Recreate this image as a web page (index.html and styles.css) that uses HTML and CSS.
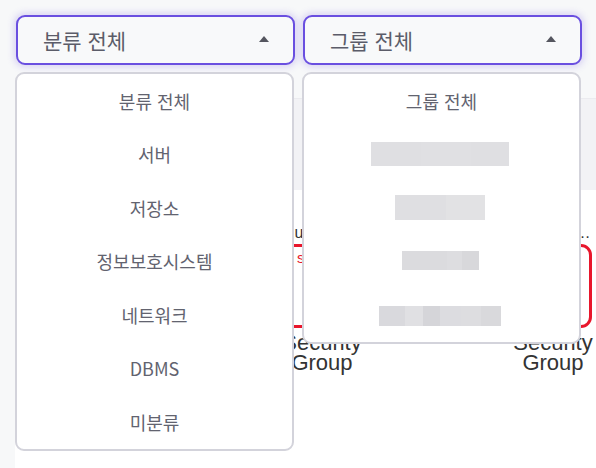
FILE: index.html
```html
<!DOCTYPE html>
<html lang="ko">
<head>
<meta charset="utf-8">
<link rel="stylesheet" href="styles.css">
</head>
<body>
<div class="toolbar">
  <div class="select-wrap">
    <div class="select"><span>분류 전체</span><span class="caret"></span></div>
    <ul class="menu">
      <li>분류 전체</li>
      <li>서버</li>
      <li>저장소</li>
      <li>정보보호시스템</li>
      <li>네트워크</li>
      <li>DBMS</li>
      <li>미분류</li>
    </ul>
  </div>
  <div class="select-wrap">
    <div class="select"><span>그룹 전체</span><span class="caret"></span></div>
    <ul class="menu">
      <li>그룹 전체</li>
      <li><span class="blur b1"></span></li>
      <li><span class="blur b2"></span></li>
      <li><span class="blur b3"></span></li>
      <li><span class="blur b4"></span></li>
    </ul>
  </div>
</div>
<div class="panel">
  <div class="band"></div>
  <div class="canvas">
    <div class="node n1">
      <div class="node-title">Rule-sg-web-prod</div>
      <div class="node-box"><span class="node-tag">sg</span></div>
      <div class="node-label"><div>Security</div><div>Group</div></div>
    </div>
    <div class="node n2">
      <div class="node-title">Rule-sg-db-prod01</div>
      <div class="node-box"><span class="node-tag">sg</span></div>
      <div class="node-label"><div>Security</div><div>Group</div></div>
    </div>
  </div>
</div>
</body>
</html>
```

FILE: styles.css
```css
* { box-sizing: border-box; }

html, body {
  margin: 0;
  padding: 0;
  height: 100%;
  overflow: hidden;
}

body {
  background: #f7f8f9;
  font-family: "Noto Sans CJK KR", "Noto Sans", sans-serif;
}

.toolbar {
  display: flex;
  gap: 8px;
  padding: 15px 0 0 16px;
  position: relative;
  z-index: 5;
}

.select-wrap {
  position: relative;
  width: 279px;
}

.select {
  height: 50px;
  border: 2px solid #6a4fe0;
  border-radius: 9px;
  background: #f8f9fa;
  box-shadow: 0 0 7px 2px rgba(106, 79, 224, 0.22);
  display: flex;
  align-items: center;
  justify-content: space-between;
  padding: 0 24px 0 25px;
  font-size: 21px;
  color: #5b5c69;
}

.caret {
  width: 0;
  height: 0;
  border-left: 5.5px solid transparent;
  border-right: 5.5px solid transparent;
  border-bottom: 6px solid #55565f;
  margin-top: -2px;
}

.menu {
  position: absolute;
  top: 57px;
  left: -1px;
  width: 279px;
  margin: 0;
  padding: 0;
  list-style: none;
  background: #fff;
  border: 2px solid #d3d3db;
  border-radius: 9px;
}

.menu li {
  height: 53.5px;
  display: flex;
  align-items: center;
  justify-content: center;
  font-size: 18px;
  color: #62636f;
}

.blur {
  display: block;
  margin-right: 3px;
}

.b1 {
  width: 138px;
  height: 24px;
  background: linear-gradient(to right, #dfdfe2 0 50px, #e0e0e3 50px 100px, #dfdfe2 100px);
}

.b2 {
  width: 90px;
  height: 25px;
  background: linear-gradient(to right, #dfdfe2 0 51px, #e2e2e4 51px);
}

.b3 {
  width: 77px;
  height: 19px;
  margin-top: -2px;
  background: linear-gradient(to right, #dbdbde 0 45px, #dddde0 45px 60px, #d8d8db 60px);
}

.b4 {
  width: 122px;
  height: 20px;
  margin-top: 2px;
  background: linear-gradient(to right, #d9d9dd 0 26px, #e0e0e3 26px 44px, #d5d5d9 44px 61px, #dcdce0 61px 82px, #dddde0 82px 102px, #d9d9dc 102px);
}

.panel {
  margin: 33px 0 0 15px;
}

.band {
  height: 92px;
  background: #f2f2f5;
  border-top: 1px solid #ebebef;
}

.canvas {
  position: relative;
  height: 300px;
  background: #fff;
}

.node {
  position: absolute;
  top: 33px;
  width: 78px;
  display: flex;
  flex-direction: column;
  align-items: center;
}

.n1 { left: 268px; }
.n2 { left: 499px; }

.node-title {
  width: 100%;
  height: 19px;
  font-family: "Liberation Sans", Arial, sans-serif;
  font-size: 16px;
  line-height: 19px;
  color: #333;
  white-space: nowrap;
  overflow: hidden;
  text-overflow: ellipsis;
}

.node-box {
  width: 78px;
  height: 84px;
  margin-top: 2px;
  border: 3px solid #e8162c;
  border-radius: 11px;
  background: #fff;
  padding: 2px 0 0 11px;
  line-height: 15px;
}

.node-tag {
  font-family: "Liberation Sans", Arial, sans-serif;
  font-size: 15px;
  color: #e8162c;
}

.node-label {
  width: 130px;
  margin-top: 5px;
  text-align: center;
  font-family: "Liberation Sans", Arial, sans-serif;
  font-size: 22px;
  line-height: 20px;
  color: #333;
}
```
